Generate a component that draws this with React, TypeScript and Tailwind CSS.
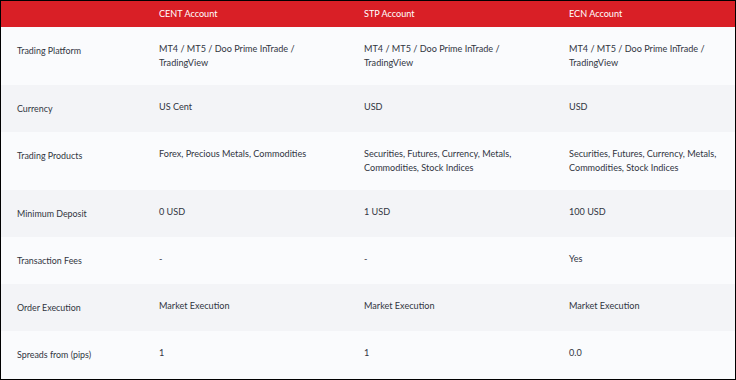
import React from "react";

const rows: { label: string; cent: string; stp: string; ecn: string }[] = [
  {
    label: "Trading Platform",
    cent: "MT4 / MT5 / Doo Prime InTrade / TradingView",
    stp: "MT4 / MT5 / Doo Prime InTrade / TradingView",
    ecn: "MT4 / MT5 / Doo Prime InTrade / TradingView",
  },
  { label: "Currency", cent: "US Cent", stp: "USD", ecn: "USD" },
  {
    label: "Trading Products",
    cent: "Forex, Precious Metals, Commodities",
    stp: "Securities, Futures, Currency, Metals, Commodities, Stock Indices",
    ecn: "Securities, Futures, Currency, Metals, Commodities, Stock Indices",
  },
  { label: "Minimum Deposit", cent: "0 USD", stp: "1 USD", ecn: "100 USD" },
  { label: "Transaction Fees", cent: "-", stp: "-", ecn: "Yes" },
  {
    label: "Order Execution",
    cent: "Market Execution",
    stp: "Market Execution",
    ecn: "Market Execution",
  },
  { label: "Spreads from (pips)", cent: "1", stp: "1", ecn: "0.0" },
];

export default function App() {
  return (
    <div
      className="w-[736px] h-[380px] overflow-hidden border border-black bg-[#fafbfd] text-[#31353f]"
      style={{ fontFamily: 'Lato, "Noto Sans", sans-serif' }}
    >
      <div className="grid grid-cols-[142px_205px_205px_1fr] h-[26px] bg-[#d91f26] text-white text-[9.1px] leading-[14px] items-center">
        <div className="pl-4" />
        <div className="pl-4">CENT Account</div>
        <div className="pl-4">STP Account</div>
        <div className="pl-4">ECN Account</div>
      </div>
      {rows.map((r, i) => (
        <div
          key={r.label}
          className={`grid grid-cols-[142px_205px_205px_1fr] items-start py-[15px] text-[9.1px] ${
            i % 2 === 1 ? "bg-[#f3f4f7]" : "bg-[#fafbfd]"
          }`}
        >
          <div className="pl-4 pr-2 leading-[17px] text-[8.9px]">{r.label}</div>
          <div className="pl-4 pr-[38px] leading-[14px]">{r.cent}</div>
          <div className="pl-4 pr-[38px] leading-[14px]">{r.stp}</div>
          <div className="pl-4 pr-4 leading-[14px]">{r.ecn}</div>
        </div>
      ))}
    </div>
  );
}
